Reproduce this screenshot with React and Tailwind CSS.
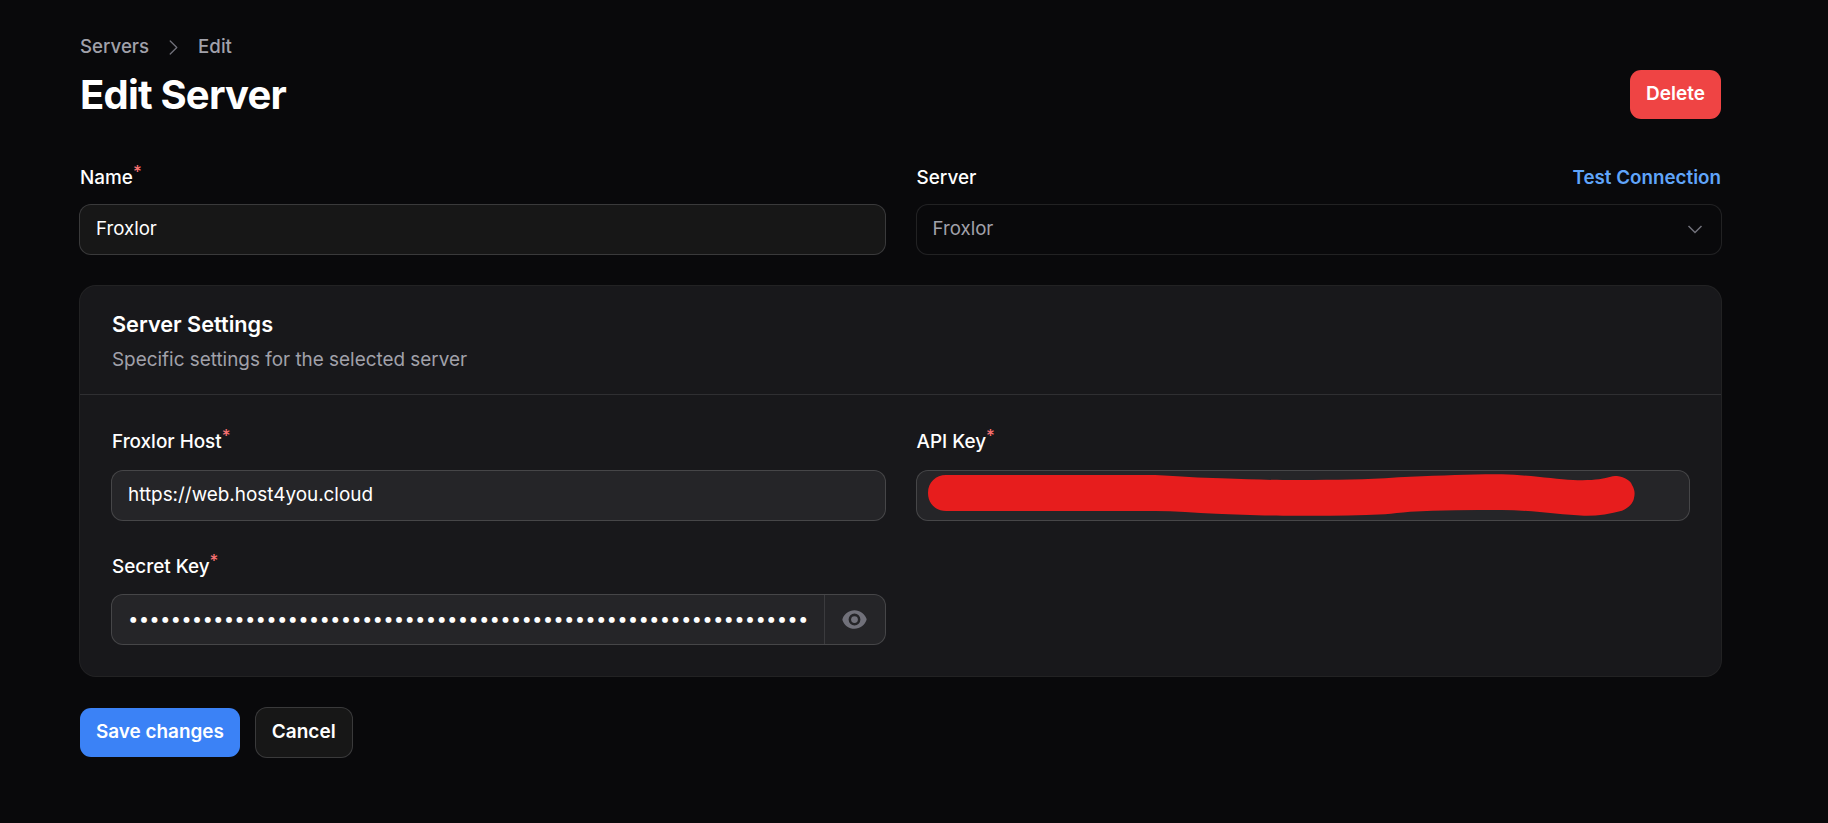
import { HiEye, HiChevronRight } from 'react-icons/hi2';

const labelClass = "text-[18.9px] leading-[26.67px] font-medium text-white";
const inputRow = "flex h-[49px] items-center rounded-[11px] ring-1 ring-white/20";

function Label({ children, required }) {
  return (
    <label className={labelClass}>
      {children}
      {required && <sup className="relative top-[-6px] align-baseline text-[17px] leading-none font-medium text-[#f87171]">*</sup>}
    </label>
  );
}

export default function App() {
  return (
    <div className="min-h-screen bg-[#09090b] pl-[80px] pr-[107px] pt-[34px] font-['Inter',sans-serif] text-white">

      {/* HEADER */}
      <header className="flex items-end justify-between">
        <div>
          <nav className="flex items-center gap-[9px] text-[18.67px] leading-[26.67px] font-medium text-[#a1a1aa]">
            <span>Servers</span>
            <HiChevronRight className="mx-[2px] h-[27px] w-[27px] p-[3px] text-[#71717a]" />
            <span>Edit</span>
          </nav>
          <h1 className="mt-[10px] text-[40px] leading-[48px] font-bold tracking-[-0.8px]">Edit Server</h1>
        </div>
        <button className="h-[49px] rounded-[11px] bg-[#ef4444] px-[16px] text-[19px] font-semibold text-white">
          Delete
        </button>
      </header>

      {/* TOP FIELDS */}
      <div className="mt-[46px] grid grid-cols-2 gap-x-[32px]">
        <div className="flex flex-col gap-[13px]">
          <Label required>Name</Label>
          <div className={`${inputRow} bg-[#171717] px-[16px] text-[18.67px]`}>Froxlor</div>
        </div>
        <div className="flex flex-col gap-[13px]">
          <div className="flex justify-between">
            <Label>Server</Label>
            <a className="text-[18.8px] leading-[26.67px] font-semibold text-[#60a5fa]">Test Connection</a>
          </div>
          <div className="flex h-[49px] items-center justify-between rounded-[11px] pl-[16px] pr-[18px] text-[18.67px] text-[#a1a1aa] ring-1 ring-white/10">
            Froxlor
            <svg className="h-[16px] w-[16px] text-[#71717a]" viewBox="0 0 16 16" fill="none" stroke="currentColor" strokeWidth="1.5">
              <path d="M1.5 5 8 11.5 14.5 5" />
            </svg>
          </div>
        </div>
      </div>

      {/* SERVER SETTINGS */}
      <section className="mt-[32px] rounded-[16px] bg-[#18181b] ring-1 ring-white/10">
        <div className="border-b border-white/10 px-[32px] pt-[24px] pb-[21px]">
          <h2 className="text-[21.7px] leading-[29px] font-semibold">Server Settings</h2>
          <p className="mt-[8px] text-[18.9px] leading-[26.67px] text-[#a1a1aa]">Specific settings for the selected server</p>
        </div>
        <div className="grid grid-cols-2 gap-x-[32px] gap-y-[34px] px-[32px] pt-[34px] pb-[32px]">
          <div className="flex flex-col gap-[15px]">
            <Label required>Froxlor Host</Label>
            <div className={`${inputRow} bg-[#252528] px-[16px] text-[18.9px]`}>https://web.host4you.cloud</div>
          </div>
          <div className="flex flex-col gap-[15px]">
            <Label required>API Key</Label>
            <div className={`${inputRow} relative bg-[#252528]`}>
              <svg className="absolute left-[-2px] top-[-1px] h-[51px] w-[773px]" viewBox="0 0 773 51">
                <path
                  fill="#e71d1d"
                  d="M13 23C13 12 21 5 31 5L240 5C265 6 285 8 306 8.3C330 9 350 10 368 10C410 10 440 10 470 8.3C480 7.5 488 7 495 6.7C530 5.5 560 4 587 4.3C615 5 640 9 658 10C670 10.5 678 10 684 9.3C692 8 696 6 702 6C710 7 716 11 717 15C720 20 720 24 719 28C718 34 713 38 707 40.7C695 44 682 46 669 45.7C645 45 615 40 587 40C555 40 525 40 495 41.7C485 42.5 478 43.5 470 44.3C435 46 400 46 368 45.7C345 45.5 320 44.5 301 43.7C280 43 260 41 240 41L31 41C21 41 13 34 13 23Z"
                />
              </svg>
            </div>
          </div>
          <div className="flex flex-col gap-[14px]">
            <Label required>Secret Key</Label>
            <div className={`${inputRow} bg-[#252528]`}>
              <input
                type="password"
                readOnly
                value={"x".repeat(64)}
                className="min-w-0 flex-1 bg-transparent pl-[16px] pr-[6px] text-[18.67px] tracking-[0.14px] text-white outline-none"
              />
              <div className="flex h-full w-[61px] shrink-0 items-center justify-center border-l border-white/10">
                <HiEye className="h-[27px] w-[27px] text-[#71717a]" />
              </div>
            </div>
          </div>
        </div>
      </section>

      {/* ACTIONS */}
      <div className="mt-[32px] flex items-center gap-[16px]">
        <button className="h-[49px] rounded-[11px] bg-[#3b82f6] px-[16px] text-[18.9px] font-semibold text-white">
          Save changes
        </button>
        <button className="h-[49px] rounded-[11px] bg-[#171717] px-[16px] text-[19px] font-semibold text-white ring-1 ring-white/20">
          Cancel
        </button>
      </div>
    </div>
  );
}
